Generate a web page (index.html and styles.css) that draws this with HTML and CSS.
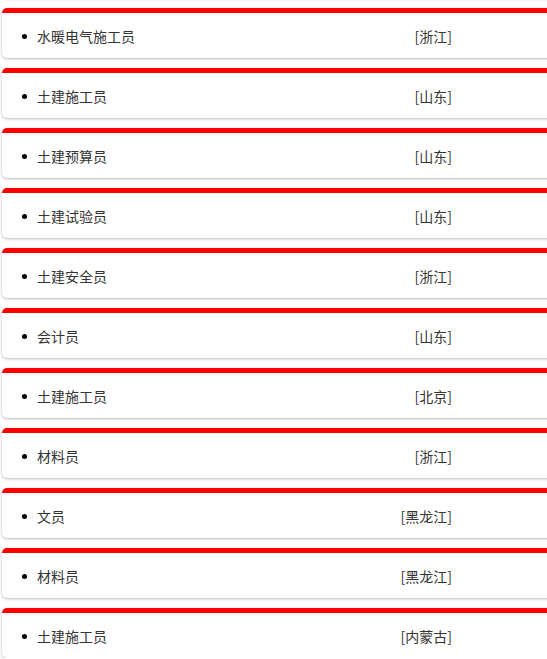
FILE: index.html
```html
<!DOCTYPE html>
<html lang="zh">
<head>
<meta charset="utf-8">
<title>岗位列表</title>
<link rel="stylesheet" href="styles.css">
</head>
<body>
<ul class="jobs">
  <li class="job job-prev" aria-hidden="true"></li>
  <li class="job"><span class="name">水暖电气施工员</span><span class="area">[浙江]</span></li>
  <li class="job"><span class="name">土建施工员</span><span class="area">[山东]</span></li>
  <li class="job"><span class="name">土建预算员</span><span class="area">[山东]</span></li>
  <li class="job"><span class="name">土建试验员</span><span class="area">[山东]</span></li>
  <li class="job"><span class="name">土建安全员</span><span class="area">[浙江]</span></li>
  <li class="job"><span class="name">会计员</span><span class="area">[山东]</span></li>
  <li class="job"><span class="name">土建施工员</span><span class="area">[北京]</span></li>
  <li class="job"><span class="name">材料员</span><span class="area">[浙江]</span></li>
  <li class="job"><span class="name">文员</span><span class="area">[黑龙江]</span></li>
  <li class="job"><span class="name">材料员</span><span class="area">[黑龙江]</span></li>
  <li class="job"><span class="name">土建施工员</span><span class="area">[内蒙古]</span></li>
</ul>
</body>
</html>
```
FILE: styles.css
```css
html, body {
  margin: 0;
  padding: 0;
  background: #fff;
  overflow: hidden;
}
body {
  font-family: "Noto Sans CJK SC", "Noto Sans", sans-serif;
  font-size: 14px;
  color: #333;
}
.jobs {
  list-style: none;
  margin: -52px 0 0 2px;
  padding: 0;
  display: flex;
  flex-direction: column;
  gap: 10px;
}
.job {
  box-sizing: border-box;
  height: 50px;
  flex: none;
  width: calc(100% + 20px);
  background: #fff;
  border-top: 5px solid #ff0000;
  border-radius: 5px;
  box-shadow: 0 1px 3px rgba(0, 0, 0, 0.28);
  display: flex;
  align-items: flex-start;
  padding: 13px 0 0 35px;
  position: relative;
}
.job::before {
  content: "";
  position: absolute;
  left: 20px;
  top: 21px;
  width: 5px;
  height: 5px;
  border-radius: 50%;
  background: #000;
}
.job-prev::before {
  display: none;
}
.name {
  flex: 1;
  line-height: 20px;
}
.area {
  line-height: 20px;
  margin-right: 115px;
}
```
